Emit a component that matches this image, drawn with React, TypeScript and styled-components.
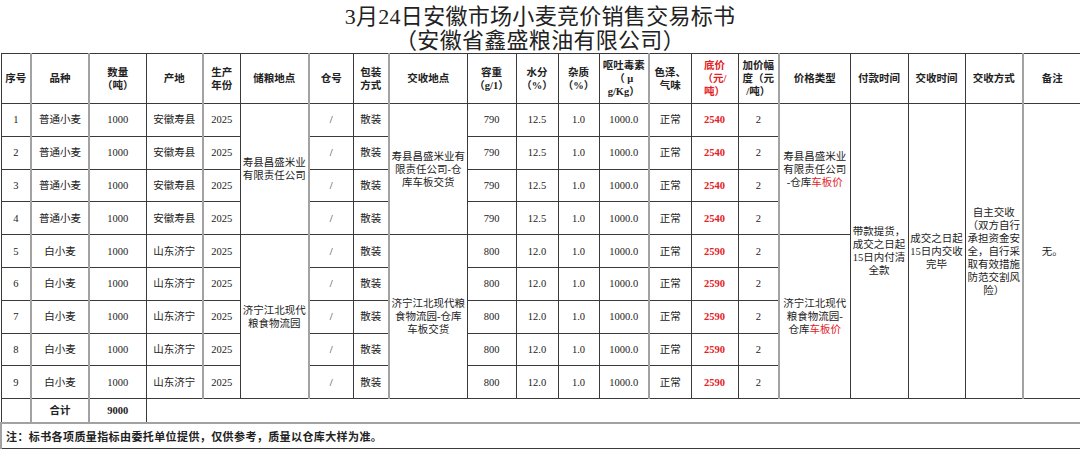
import React from "react";
import styled, { createGlobalStyle } from "styled-components";

const GlobalStyle = createGlobalStyle`
  html, body { margin: 0; padding: 0; background: #ffffff; }
  body {
    width: 1080px;
    font-family: "Liberation Serif", "Noto Sans CJK SC", serif;
    color: #222;
  }
`;

const COLS = [30, 58, 57, 57, 37, 69, 44, 36, 78, 49, 42, 41, 50, 42, 47, 41, 71, 58, 57, 58, 58];
const GRAY = new Set([1, 2, 4, 6, 8, 13, 16, 20]);
const RED = "#e3211f";

const Page = styled.div`
  width: 1080px;
  height: 450px;
  overflow: hidden;
  background: #fff;
`;

const Title = styled.div`
  height: 53px;
  box-sizing: border-box;
  padding-top: 5px;
  text-align: center;
  font-size: 22px;
  line-height: 24px;
  font-weight: 400;
  color: #222;
  letter-spacing: 0.3px;
`;

const Table = styled.table`
  width: 1080px;
  table-layout: fixed;
  border-collapse: collapse;
  font-size: 10.5px;
`;

const HeadRow = styled.tr`
  height: 50px;
`;

const BodyRow = styled.tr`
  height: 32.8px;
`;

const TotalRow = styled.tr`
  height: 24px;
`;

const NoteRow = styled.tr`
  height: 26px;
`;

const Cell = styled.td<{ $gray?: boolean; $red?: boolean; $bold?: boolean }>`
  border: 1px solid #3a3a3a;
  ${(p) => (p.$gray ? "border-left: 2px solid #a2a2a2;" : "")}
  padding: 0;
  text-align: center;
  vertical-align: middle;
  line-height: 13px;
  font-size: 10.5px;
  white-space: nowrap;
  color: ${(p) => (p.$red ? RED : "#222")};
  font-weight: ${(p) => (p.$bold ? 700 : 400)};
`;

const HeadCell = styled(Cell).attrs({ as: "th" })`
  font-weight: 700;
  line-height: 13px;
`;

const TotalCell = styled(Cell)`
  border-bottom: 2px solid #a2a2a2;
`;

const NoteCell = styled.td`
  border: 1px solid #3a3a3a;
  border-left: 2px solid #a2a2a2;
  border-top: 2px solid #a2a2a2;
  padding: 0 0 0 4px;
  text-align: left;
  vertical-align: middle;
  font-size: 11px;
  font-weight: 700;
  color: #222;
  letter-spacing: 0.4px;
`;

const RedText = styled.span`
  color: ${RED};
`;

const headers: React.ReactNode[] = [
  "序号",
  "品种",
  <>数量<br />（吨）</>,
  "产地",
  <>生产<br />年份</>,
  "储粮地点",
  "仓号",
  <>包装<br />方式</>,
  "交收地点",
  <>容重<br />（g/1）</>,
  <>水分<br />（%）</>,
  <>杂质<br />（%）</>,
  <>呕吐毒素<br />（ μ<br />g/Kg）</>,
  <>色泽、<br />气味</>,
  <>底价<br />（元/<br />吨）</>,
  <>加价幅<br />度（元<br />/吨）</>,
  "价格类型",
  "付款时间",
  "交收时间",
  "交收方式",
  "备注",
];

type Row = {
  idx: number;
  kind: string;
  origin: string;
  rong: string;
  water: string;
  price: string;
};

const rows: Row[] = Array.from({ length: 9 }, (_, i) => {
  const a = i < 4;
  return {
    idx: i + 1,
    kind: a ? "普通小麦" : "白小麦",
    origin: a ? "安徽寿县" : "山东济宁",
    rong: a ? "790" : "800",
    water: a ? "12.5" : "12.0",
    price: a ? "2540" : "2590",
  };
});

const g = (c: number) => GRAY.has(c);

export default function App() {
  return (
    <Page>
      <GlobalStyle />
      <Title>
        3月24日安徽市场小麦竞价销售交易标书
        <br />
        （安徽省鑫盛粮油有限公司）
      </Title>
      <Table>
        <colgroup>
          {COLS.map((w, i) => (
            <col key={i} style={{ width: w }} />
          ))}
        </colgroup>
        <thead>
          <HeadRow>
            {headers.map((h, i) => (
              <HeadCell key={i} $gray={g(i)} $red={i === 14}>
                {h}
              </HeadCell>
            ))}
          </HeadRow>
        </thead>
        <tbody>
          {rows.map((r, i) => (
            <BodyRow key={r.idx}>
              <Cell $gray={g(0)}>{r.idx}</Cell>
              <Cell $gray={g(1)}>{r.kind}</Cell>
              <Cell $gray={g(2)}>1000</Cell>
              <Cell $gray={g(3)}>{r.origin}</Cell>
              <Cell $gray={g(4)}>2025</Cell>
              {i === 0 && (
                <Cell rowSpan={4} $gray={g(5)}>
                  寿县昌盛米业<br />有限责任公司
                </Cell>
              )}
              {i === 4 && (
                <Cell rowSpan={5} $gray={g(5)}>
                  济宁江北现代<br />粮食物流园
                </Cell>
              )}
              <Cell $gray={g(6)}>/</Cell>
              <Cell $gray={g(7)}>散装</Cell>
              {i === 0 && (
                <Cell rowSpan={4} $gray={g(8)}>
                  寿县昌盛米业有<br />限责任公司-仓<br />库车板交货
                </Cell>
              )}
              {i === 4 && (
                <Cell rowSpan={5} $gray={g(8)}>
                  济宁江北现代粮<br />食物流园-仓库<br />车板交货
                </Cell>
              )}
              <Cell $gray={g(9)}>{r.rong}</Cell>
              <Cell $gray={g(10)}>{r.water}</Cell>
              <Cell $gray={g(11)}>1.0</Cell>
              <Cell $gray={g(12)}>1000.0</Cell>
              <Cell $gray={g(13)}>正常</Cell>
              <Cell $gray={g(14)} $red $bold>
                {r.price}
              </Cell>
              <Cell $gray={g(15)}>2</Cell>
              {i === 0 && (
                <Cell rowSpan={4} $gray={g(16)}>
                  寿县昌盛米业<br />有限责任公司<br />-仓库<RedText>车板价</RedText>
                </Cell>
              )}
              {i === 4 && (
                <Cell rowSpan={5} $gray={g(16)}>
                  济宁江北现代<br />粮食物流园-<br />仓库<RedText>车板价</RedText>
                </Cell>
              )}
              {i === 0 && (
                <>
                  <Cell rowSpan={9} $gray={g(17)}>
                    带款提货，<br />成交之日起<br />15日内付清<br />全款
                  </Cell>
                  <Cell rowSpan={9} $gray={g(18)}>
                    成交之日起<br />15日内交收<br />完毕
                  </Cell>
                  <Cell rowSpan={9} $gray={g(19)}>
                    自主交收<br />（双方自行<br />承担资金安<br />全，自行采<br />取有效措施<br />防范交割风<br />险）
                  </Cell>
                  <Cell rowSpan={9} $gray={g(20)}>
                    无。
                  </Cell>
                </>
              )}
            </BodyRow>
          ))}
          <TotalRow>
            <TotalCell $gray={g(0)} />
            <TotalCell $gray={g(1)} $bold>
              合计
            </TotalCell>
            <TotalCell $gray={g(2)} $bold>
              9000
            </TotalCell>
            <TotalCell colSpan={18} $gray={g(3)} />
          </TotalRow>
          <NoteRow>
            <NoteCell colSpan={21}>
              注：标书各项质量指标由委托单位提供，仅供参考，质量以仓库大样为准。
            </NoteCell>
          </NoteRow>
        </tbody>
      </Table>
    </Page>
  );
}
